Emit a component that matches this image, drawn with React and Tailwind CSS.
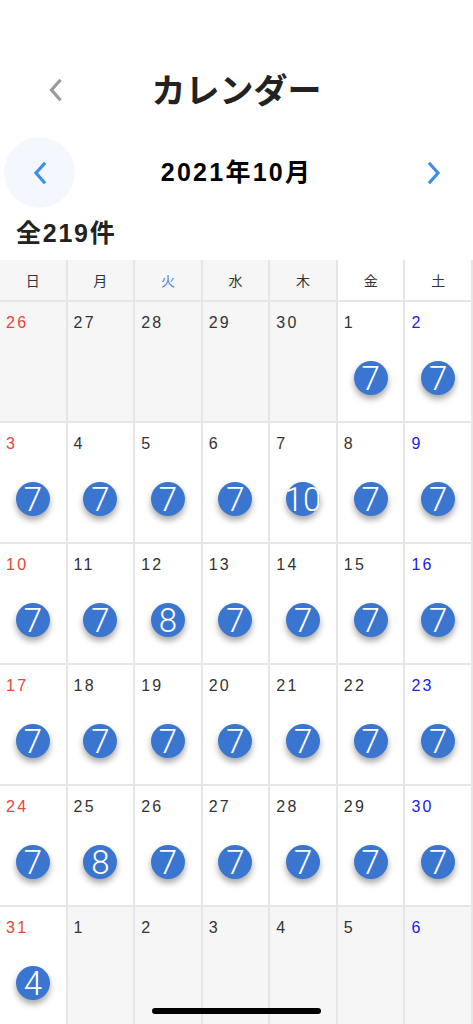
import React from 'react'

const WEEKDAYS = ['日', '月', '火', '水', '木', '金', '土']

// counts per day of October 2021
const counts = { 7: 10, 12: 8, 25: 8, 31: 4 }

function buildDays() {
    const days = []
    for (const d of [26, 27, 28, 29, 30]) days.push({ day: d, outside: true })
    for (let d = 1; d <= 31; d++) days.push({ day: d, outside: false, count: counts[d] ?? 7 })
    for (const d of [1, 2, 3, 4, 5, 6]) days.push({ day: d, outside: true })
    return days
}

function Chevron({ dir = 'left', className }) {
    return (
        <svg viewBox="0 0 16 24" className={className} fill="none" stroke="currentColor" strokeWidth="3.2" strokeLinecap="square">
            {dir === 'left' ? <path d="M12 3 L4 12 L12 21" /> : <path d="M4 3 L12 12 L4 21" />}
        </svg>
    )
}

function DayCell({ item, col }) {
    let color = 'text-[#333]'
    if (col === 0) color = 'text-[#e8443a]'
    if (col === 6) color = 'text-[#2020ee]'
    return (
        <div className={`h-[121px] border-r-2 border-b-2 border-[#e6e6e6] flex flex-col ${item.outside ? 'bg-[#f6f6f6]' : 'bg-white'}`}>
            <p className={`pl-[6px] pt-[10px] text-[16px] leading-[22px] tracking-[0.14em] font-['Liberation_Sans',sans-serif] ${color}`}>{item.day}</p>
            {item.count && (
                <div className="mt-[27px] self-center w-[34px] h-[34px] rounded-full bg-[#3a75cf] shadow-[0_4px_6px_rgba(0,0,0,0.35)] flex items-center justify-center">
                    <span className="text-white text-[33px] leading-none font-['Roboto',sans-serif] font-light">{item.count}</span>
                </div>
            )}
        </div>
    )
}

export default function App() {
    const days = buildDays()
    return (
        <div className="w-[473px] h-[1024px] overflow-hidden bg-white font-['Noto_Sans_CJK_JP',sans-serif] relative">
            <div className="h-[60px]" />
            <div className="h-[60px] flex items-center justify-center relative">
                <Chevron className="absolute left-[47px] w-[17px] h-[24px] text-[#9a9a9a]" />
                <h1 className="text-[34px] font-bold text-[#222] leading-none -mt-[2px]">カレンダー</h1>
            </div>
            <div className="mt-[17px] h-[71px] flex items-center justify-between px-[4px]">
                <div className="w-[71px] h-[71px] rounded-full bg-[#f4f8fe] flex items-center justify-center">
                    <Chevron className="w-[16px] h-[24px] text-[#3e8de8]" />
                </div>
                <p className="text-[25px] font-bold text-black tracking-[0.09em] font-['Liberation_Sans','Noto_Sans_CJK_JP',sans-serif]">2021年10月</p>
                <div className="w-[71px] h-[71px] flex items-center justify-center">
                    <Chevron dir="right" className="w-[16px] h-[24px] text-[#3e8de8]" />
                </div>
            </div>
            <div className="h-[52px] flex items-center pl-[16px]">
                <p className="text-[25px] font-bold text-[#222] tracking-[0.07em] font-['Liberation_Sans','Noto_Sans_CJK_JP',sans-serif]">全219件</p>
            </div>
            <div className="grid grid-cols-7">
                {WEEKDAYS.map((w, i) => (
                    <div key={w} className={`h-[42px] flex items-center justify-center border-r-2 border-b-2 border-[#e6e6e6] text-[14px] ${i < 5 ? 'bg-[#f6f6f6]' : 'bg-white'} ${i === 2 ? 'text-[#4a80d8]' : 'text-[#333]'}`}>
                        {w}
                    </div>
                ))}
                {days.map((item, i) => (
                    <DayCell key={i} item={item} col={i % 7} />
                ))}
            </div>
            <div className="absolute bottom-[10px] left-[152px] w-[169px] h-[6px] rounded-full bg-black" />
        </div>
    )
}
